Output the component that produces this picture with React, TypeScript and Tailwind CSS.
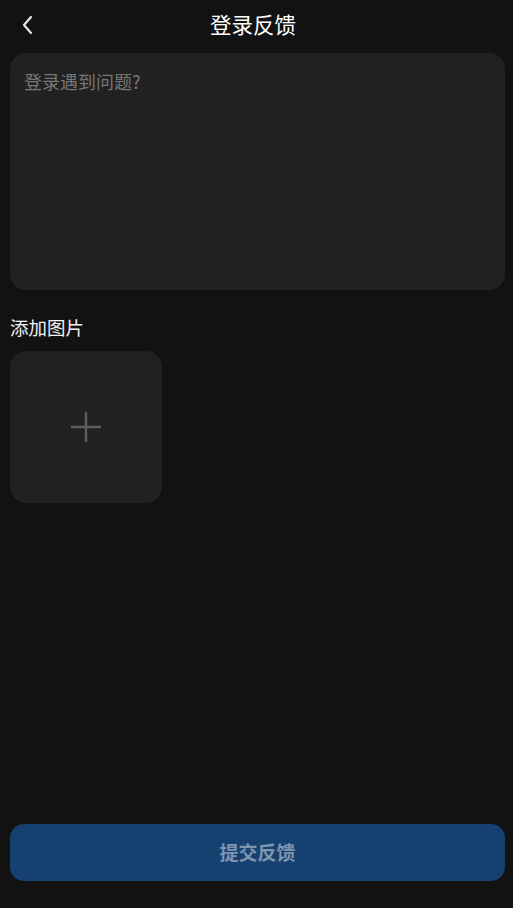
import React from "react";

export default function App() {
  return (
    <div
      className="flex min-h-[908px] w-full flex-col bg-[#121212] pl-[10px] pr-[8px]"
      style={{ fontFamily: '"Noto Sans CJK SC", "Noto Sans", sans-serif' }}
    >
      <div className="relative flex h-[53px] items-center justify-center">
        <button className="absolute left-[5px] top-[13px] flex h-[24px] w-[24px] items-center justify-center">
          <svg width="14" height="22" viewBox="0 0 14 22" fill="none">
            <path d="M11 3 L4 11 L11 19" stroke="#e6e6e6" strokeWidth="2.2" strokeLinecap="round" strokeLinejoin="round" />
          </svg>
        </button>
        <span className="-mt-[5px] mr-[9px] text-[21.5px] leading-[28px] text-white">登录反馈</span>
      </div>
      <div className="h-[237px] rounded-[16px] bg-[#212121] px-[14px] pt-[15px]">
        <div className="text-[18px] leading-[26px] text-[#777777]">登录遇到问题?</div>
      </div>
      <div className="mt-[25px] text-[18.5px] leading-[24px] text-[#f2f2f2]">添加图片</div>
      <div className="mt-[12px] flex h-[152px] w-[152px] items-center justify-center rounded-[16px] bg-[#212121]">
        <svg width="30" height="30" viewBox="0 0 30 30" fill="none">
          <path d="M15 1 V29 M1 15 H29" stroke="#5e5e5e" strokeWidth="2.4" strokeLinecap="round" />
        </svg>
      </div>
      <div className="flex-1" />
      <button className="mb-[27px] flex h-[57px] w-full items-center justify-center rounded-[14px] bg-[#15406f] text-[19px] font-bold text-[#7e95b0]">
        提交反馈
      </button>
    </div>
  );
}
